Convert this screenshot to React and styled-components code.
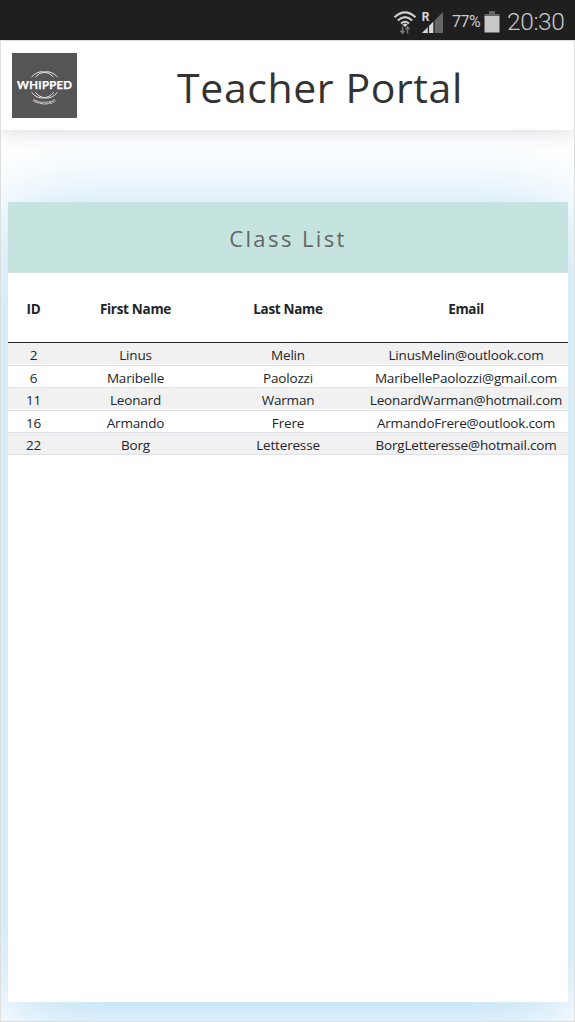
import React from "react";
import styled, { createGlobalStyle } from "styled-components";

const GlobalStyle = createGlobalStyle`
  *, *::before, *::after { box-sizing: border-box; }
  body {
    margin: 0;
    background: #fff;
    color: #212529;
    font-family: "Open Sans", "Noto Sans", sans-serif;
  }
`;

const Screen = styled.div`
  display: flex;
  flex-direction: column;
  width: 575px;
  height: 1022px;
  overflow: hidden;
`;

const StatusBar = styled.div`
  display: flex;
  flex: none;
  justify-content: flex-end;
  align-items: center;
  height: 40px;
  padding: 3px 9px 0 0;
  background: #1f1f1f;
  color: #c9c9c9;
  font-family: Roboto, sans-serif;
`;

const Battery = styled.span`
  width: 30px;
  margin-left: 8px;
  font-size: 16px;
  line-height: 20px;
  white-space: nowrap;
  letter-spacing: -0.5px;
`;

const Clock = styled.span`
  width: 59px;
  margin-left: 7px;
  font-size: 24.5px;
  font-weight: 300;
  line-height: 30px;
  white-space: nowrap;
  letter-spacing: -0.4px;
`;

const Page = styled.div`
  display: flex;
  flex: 1;
  flex-direction: column;
  border: 1px solid #dedede;
  overflow: hidden;
`;

const Header = styled.header`
  display: flex;
  flex: none;
  align-items: center;
  height: 89px;
  padding-left: 11px;
  background: #fff;
  box-shadow: 0 0 20px rgba(33, 37, 41, 0.2);
  position: relative;
  z-index: 1;
`;

const Title = styled.h1`
  flex: 1;
  margin: 3px 11px 0 0;
  color: #333;
  font-size: 41px;
  font-weight: 400;
  line-height: 60px;
  letter-spacing: 0.6px;
  text-align: center;
  white-space: nowrap;
`;

const Card = styled.section`
  flex: none;
  width: 560px;
  height: 800px;
  margin: 72px 0 0 7px;
  background: #fff;
  box-shadow: 0 11px 80px #abd8f1;
`;

const CardTitle = styled.h2`
  height: 71px;
  margin: 0;
  border-bottom: 1px solid #dadfe0;
  background: #c5e4df;
  color: #666;
  font-size: 22px;
  font-weight: 400;
  line-height: 73px;
  letter-spacing: 2.4px;
  text-align: center;
`;

const Table = styled.table`
  display: block;
  font-size: 13.5px;
`;

const Head = styled.thead`
  display: block;
  border-bottom: 1px solid #212529;
`;

const Body = styled.tbody`
  display: block;
`;

const Row = styled.tr`
  display: grid;
  grid-template-columns: 51px 153px 152px 204px;
  height: ${(p) => p.$height}px;
  border-bottom: ${(p) => (p.$head ? "0" : "1px solid #dee2e6")};
  background: linear-gradient(${(p) => (p.$striped ? "#f1f1f1, #f1f1f1" : "#fff, #fff")}) top / 100% 21px no-repeat;
`;

const HeadCell = styled.th`
  padding: 0;
  font-size: 13.5px;
  font-weight: 700;
  line-height: 73px;
  text-align: center;
  letter-spacing: -0.3px;
`;

const Cell = styled.td`
  padding: 0;
  line-height: 25px;
  text-align: center;
  white-space: nowrap;
  letter-spacing: -0.18px;
`;

const students = [
  ["2", "Linus", "Melin", "LinusMelin@outlook.com"],
  ["6", "Maribelle", "Paolozzi", "MaribellePaolozzi@gmail.com"],
  ["11", "Leonard", "Warman", "LeonardWarman@hotmail.com"],
  ["16", "Armando", "Frere", "ArmandoFrere@outlook.com"],
  ["22", "Borg", "Letteresse", "BorgLetteresse@hotmail.com"],
];
const rowHeights = [23, 22, 23, 22, 22];

const WifiIcon = () => (
  <svg width="24" height="26" viewBox="0 0 24 26" fill="none" stroke="#d0d0d0">
    <path d="M1.5 8.2Q12-1.5 22.5 8.2" strokeWidth="2.2" />
    <path d="M4.8 11.5Q12 4.8 19.2 11.5" strokeWidth="2.1" />
    <path d="M8 14.5Q12 11 16 14.5" strokeWidth="2" />
    <path d="M9.3 15.5Q12 13.3 14.7 15.5L12 18Z" fill="#d0d0d0" stroke="none" />
    <path d="M9.5 17.5v6.5m-2-2.3 2 2.3 2-2.3M14.5 24.5V18m-2 2.3 2-2.3 2 2.3" stroke="#777" strokeWidth="1.5" />
  </svg>
);

const SignalIcon = () => (
  <svg width="23" height="24" viewBox="-1 0 23 24" overflow="visible">
    <path d="M0 23 21 2v21Z" fill="#666" />
    <path d="M0 23 12 11v12Z" fill="#d8d8d8" />
    <path d="M6.4 15v8M12 10v13" stroke="#1f1f1f" strokeWidth="1.3" />
    <path d="M0 0h8v12H0z" fill="#1f1f1f" />
    <text x="-0.3" y="10.8" fill="#d8d8d8" fontFamily="Roboto, sans-serif" fontWeight="700" fontSize="12">R</text>
  </svg>
);

const BatteryIcon = () => (
  <svg width="16" height="22" viewBox="0 0 16 22">
    <path d="M5 0h6v3h4.5v3H.5V3H5Z" fill="#666" />
    <path d="M.5 5h15v16.5H.5Z" fill="#c8c8c8" />
  </svg>
);

const IconSlot = styled.span`
  display: flex;
  margin-left: ${(p) => p.$left}px;
`;

const Logo = () => (
  <svg width="65" height="65" viewBox="0 0 65 65">
    <rect width="65" height="65" fill="#555" />
    <g fill="none" stroke="#e5e5e5" strokeWidth="1">
      <path d="M19.5 24Q25 18.2 31 18.8Q38 19.5 41.5 24M45.5 24Q40 18.2 34 18.8Q27 19.5 23.5 24" />
      <path d="M19.5 39.3Q25 45.6 31 45Q38 44.3 41.5 39.3M45.5 39.3Q40 45.6 34 45Q27 44.3 23.5 39.3" />
    </g>
    <path id="logo-arc" d="M20.5 48.3Q32.5 55 44.5 48.3" fill="none" />
    <text x="5" y="36" fill="#fff" stroke="#fff" strokeWidth="0.25" fontFamily="Lato, sans-serif" fontWeight="700" fontSize="11.4" textLength="55">WHIPPED</text>
    <text fill="#ddd" fontFamily="Lato, sans-serif" fontWeight="700" fontSize="3.9">
      <textPath href="#logo-arc" textLength="25">MANAGEMENT</textPath>
    </text>
  </svg>
);

export default function App() {
  return (
    <Screen>
      <GlobalStyle />
      <StatusBar>
        <IconSlot $left={0}><WifiIcon /></IconSlot>
        <IconSlot $left={4}><SignalIcon /></IconSlot>
        <Battery>77%</Battery>
        <IconSlot $left={2}><BatteryIcon /></IconSlot>
        <Clock>20:30</Clock>
      </StatusBar>
      <Page>
        <Header>
          <Logo />
          <Title>Teacher Portal</Title>
        </Header>
        <Card>
          <CardTitle>Class List</CardTitle>
          <Table>
            <Head>
              <Row $head $height={69}>
                {["ID", "First Name", "Last Name", "Email"].map((h) => (
                  <HeadCell key={h} scope="col">{h}</HeadCell>
                ))}
              </Row>
            </Head>
            <Body>
              {students.map((student, i) => (
                <Row key={student[0]} $height={rowHeights[i]} $striped={i % 2 === 0}>
                  {student.map((value) => (
                    <Cell key={value}>{value}</Cell>
                  ))}
                </Row>
              ))}
            </Body>
          </Table>
        </Card>
      </Page>
    </Screen>
  );
}
